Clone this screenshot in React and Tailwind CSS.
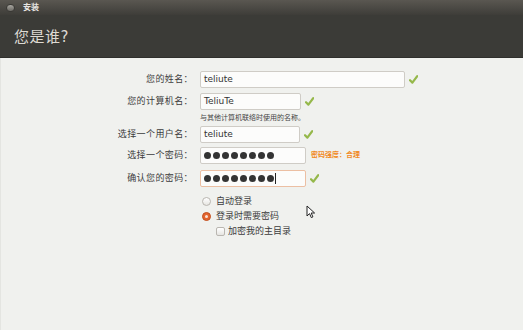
import React from "react";

const CJK = { fontFamily: '"DejaVu Sans","Noto Sans CJK SC",sans-serif' };

function Check() {
  return (
    <svg width="9" height="9" viewBox="0 0 9 9" className="shrink-0">
      <path d="M1 5.2 L3.4 7.6 L8.2 1.2" fill="none" stroke="#95b84a" strokeWidth="2.2" strokeLinecap="round" strokeLinejoin="round" />
    </svg>
  );
}

function Dots({ n }) {
  return (
    <div className="flex items-center gap-[2px]">
      {Array.from({ length: n }).map((_, i) => (
        <span key={i} className="block w-[7px] h-[7px] rounded-full bg-[#333333]" />
      ))}
    </div>
  );
}

function Row({ label, children, mt }) {
  return (
    <div className={`flex items-center h-[17px] ${mt}`}>
      <div className="w-[192px] text-right text-[9px] leading-none text-[#3c3c3c] tracking-[0.4px]">{label}</div>
      <div className="ml-[7px] flex items-center">{children}</div>
    </div>
  );
}

function Input({ w, children, focus }) {
  return (
    <div
      className={`h-[17px] ${w} rounded-[2px] border ${
        focus ? "border-[#ecbfa3]" : "border-[#cfccc6]"
      } bg-[#fcfcfb] flex items-center px-[3px] text-[9px] text-[#333333]`}
    >
      {children}
    </div>
  );
}

export default function App() {
  return (
    <div className="relative w-[523px] h-[330px] overflow-hidden bg-[#f0f1ee]" style={CJK}>
      {/* title bar */}
      <div className="h-[15px] bg-gradient-to-b from-[#5a5751] to-[#3e3d39] flex items-center">
        <span className="ml-[6px] w-[9px] h-[8px] rounded-full bg-gradient-to-b from-[#a8a6a0] to-[#6c6a65] border border-[#3a3935]" />
        <span className="ml-[8px] text-[8px] font-bold text-[#e8e6e2] leading-none">安装</span>
      </div>
      {/* header */}
      <div className="h-[43px] bg-[#3b3b37] flex items-center pl-[14px] border-b border-[#2f2f2c]">
        <span className="text-[15px] text-[#dedad3] leading-none mt-[3px] tracking-[0.5px]">您是谁?</span>
      </div>
      {/* body */}
      <div className="flex flex-col pt-[13px] border-l border-[#e4e5e1] h-full">
        <Row label="您的姓名：">
          <Input w="w-[205px]">teliute</Input>
          <span className="ml-[4px]"><Check /></span>
        </Row>
        <Row label="您的计算机名：" mt="mt-[5px]">
          <Input w="w-[101px]">TeliuTe</Input>
          <span className="ml-[4px]"><Check /></span>
        </Row>
        <div className="ml-[199px] mt-[5px] text-[7px] leading-none text-[#444444]">与其他计算机联络时使用的名称。</div>
        <Row label="选择一个用户名：" mt="mt-[4px]">
          <Input w="w-[100px]">teliute</Input>
          <span className="ml-[4px]"><Check /></span>
        </Row>
        <Row label="选择一个密码：" mt="mt-[4px]">
          <Input w="w-[106px]"><Dots n={8} /></Input>
          <span className="ml-[5px] text-[7px] font-bold text-[#f08a24] leading-none">密码强度：合理</span>
        </Row>
        <Row label="确认您的密码：" mt="mt-[6px]">
          <Input w="w-[106px]" focus>
            <Dots n={8} />
            <span className="ml-[1px] w-px h-[11px] bg-[#222222]" />
          </Input>
          <span className="ml-[4px]"><Check /></span>
        </Row>
        <div className="ml-[201px] mt-[7px] flex flex-col text-[9px] text-[#3c3c3c] leading-none">
          <div className="h-[15px] flex items-center">
            <span className="w-[9px] h-[9px] rounded-full border border-[#b9b6b0] bg-gradient-to-b from-[#ffffff] to-[#e6e5e1]" />
            <span className="ml-[5px]">自动登录</span>
          </div>
          <div className="h-[15px] flex items-center">
            <span className="w-[9px] h-[9px] rounded-full border border-[#c2501f] bg-[#e3652f] flex items-center justify-center">
              <span className="w-[3px] h-[3px] rounded-full bg-[#fbe3d6]" />
            </span>
            <span className="ml-[5px]">登录时需要密码</span>
          </div>
          <div className="h-[15px] flex items-center ml-[14px]">
            <span className="w-[9px] h-[9px] rounded-[2px] border border-[#b9b6b0] bg-gradient-to-b from-[#ffffff] to-[#e6e5e1]" />
            <span className="ml-[3px]">加密我的主目录</span>
          </div>
        </div>
      </div>
      {/* mouse cursor */}
      <svg className="absolute left-[306px] top-[205px]" width="10" height="14" viewBox="0 0 10 14">
        <path d="M1 1 L1 11 L3.5 8.6 L5.3 12.6 L6.9 11.9 L5.2 8 L8.6 8 Z" fill="#ffffff" stroke="#222222" strokeWidth="1" strokeLinejoin="round" />
      </svg>
    </div>
  );
}
